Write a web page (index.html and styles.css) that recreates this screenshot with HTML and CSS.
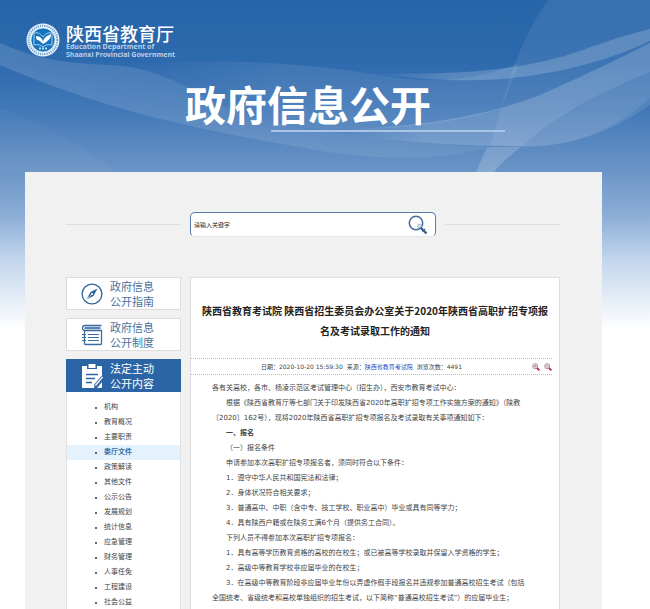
FILE: index.html
```html
<!DOCTYPE html>
<html lang="zh-CN">
<head>
<meta charset="utf-8">
<meta name="viewport" content="width=device-width, initial-scale=1">
<title>陕西省教育厅 政府信息公开</title>
<link rel="stylesheet" href="styles.css">
</head>
<body>
<svg class="waves" viewBox="0 0 650 172" preserveAspectRatio="none" aria-hidden="true">
  <defs>
    <linearGradient id="fade-in">
      <stop offset="0" stop-color="#fff" stop-opacity="0"/>
      <stop offset=".4" stop-color="#fff" stop-opacity=".08"/>
      <stop offset="1" stop-color="#fff" stop-opacity=".08"/>
    </linearGradient>
    <linearGradient id="fade-out">
      <stop offset="0" stop-color="#fff" stop-opacity=".14"/>
      <stop offset="1" stop-color="#fff" stop-opacity=".06"/>
    </linearGradient>
    <linearGradient id="streak">
      <stop offset="0" stop-color="#fff" stop-opacity="0"/>
      <stop offset=".3" stop-color="#fff" stop-opacity=".18"/>
      <stop offset="1" stop-color="#fff" stop-opacity=".18"/>
    </linearGradient>
  </defs>
  <path d="M0 43C40 61 70 63 110 65C150 67 175 80 200 95C240 118 290 128 330 132C380 138 440 145 487 147C440 164 350 158 300 147C200 130 110 112 0 65Z" fill="url(#fade-out)"/>
  <path d="M120 66C220 56 320 64 390 77C440 84 480 79 519 63L501 109C440 126 400 129 325 130C260 126 215 104 190 90C170 76 145 68 120 66Z" fill="url(#fade-in)"/>
  <path d="M548 0H650V98C620 126 580 145 530 147C515 147 498 146 490 145L501 109C512 65 528 28 548 0Z" fill="#fff" opacity=".08"/>
  <path d="M370 73C450 75 520 72 580 51C610 40 630 34 650 29V41C610 60 550 78 480 80C445 81 415 79 370 73Z" fill="url(#streak)"/>
  <path d="M325 131C400 127 470 122 540 95C590 73 620 58 650 43V72C600 92 550 119 523 146C460 147 390 141 325 131Z" fill="url(#streak)"/>
  <path d="M523 146C550 119 600 92 650 72V105C610 133 570 147 523 146Z" fill="#fff" opacity=".1"/>
  <path d="M487 147H521C511 155 501 163 494 172H476Z" fill="#fff" opacity=".18"/>
  <path d="M0 108C40 122 75 142 112 168L108 172H0Z" fill="#fff" opacity=".03"/>
</svg>

<header class="banner">
  <a class="brand" href="#">
    <svg class="emblem" viewBox="0 0 34 34" aria-hidden="true">
      <circle cx="17" cy="17" r="16.5" fill="#eaf4fc"/>
      <circle cx="17" cy="17" r="14.3" fill="none" stroke="#6d9dcb" stroke-width="2" stroke-dasharray="1.2 1"/>
      <circle cx="17" cy="17" r="12" fill="#1573bd" stroke="#fff" stroke-width=".6"/>
      <path d="M8 10C12 9 15 11 17 14C19 11 22 9 26 10V22C22 21 19 22 17 24C15 22 12 21 8 22Z" fill="none" stroke="#9fd0ef" stroke-width="1"/>
      <path d="M17 21C15 19 13 17 11 17C10 15 10 14 10 13C14 13 17 16 17 19C18 14 21 13 25 11C25 16 22 18 17 21Z" fill="#fff"/>
      <path d="M13 25.500H21" stroke="#b9def4" stroke-width="2" stroke-dasharray="2 1"/>
    </svg>
    <span class="brand-text">
      <span class="brand-name">陕西省教育厅</span>
      <span class="brand-en">Education Department of</span>
      <span class="brand-en">Shaanxi Provincial Government</span>
    </span>
  </a>
  <h1 class="site-title">政府信息公开</h1>
</header>

<main class="page">
  <form class="search-row">
    <span class="rule"></span>
    <div class="search">
      <input class="search-input" type="text" placeholder="请输入关键字" aria-label="请输入关键字">
      <button class="search-button" type="button" aria-label="搜索">
        <svg viewBox="0 0 20 20" aria-hidden="true">
          <circle cx="8" cy="8" r="6.700" fill="none" stroke="#446b99" stroke-width="1.500"/>
          <circle cx="11.500" cy="11" r="2" fill="#d5e2ef" stroke="#8ba8c8" stroke-width=".7"/>
          <path d="M12.500 12.500L18.500 18.500" stroke="#385f8e" stroke-width="2.400"/>
          <path d="M14.500 16.500L17 14" stroke="#385f8e" stroke-width="1.200"/>
        </svg>
      </button>
    </div>
    <span class="rule"></span>
  </form>

  <div class="columns">
    <nav class="sidebar">
      <a class="tab" href="#">
        <svg class="tab-icon" viewBox="0 0 22 24" aria-hidden="true">
          <circle cx="11" cy="12" r="9.900" fill="none" stroke="#2f659d" stroke-width="1.300"/>
          <path d="M16.500 6.500L12.500 14L5.500 17.500L9.500 10Z" fill="#2f659d"/>
          <path d="M6 17L11.500 11.500" stroke="#fff" stroke-width=".7"/>
          <circle cx="11" cy="12" r="1" fill="#fff"/>
        </svg>
        <span>政府信息<br>公开指南</span>
      </a>
      <a class="tab" href="#">
        <svg class="tab-icon" viewBox="0 0 22 24" fill="none" stroke="#3b6b9f" aria-hidden="true">
          <path d="M3.500 7.500V20.500Q3.500 21.500 4.500 21.500H19.500Q20.500 21.500 20.500 20.500V7.500H3.500Q1.500 7.500 1.500 5Q1.500 2.500 3.500 2.500H20.500" stroke-width="1.300"/>
          <path d="M3.500 5H19.500" stroke-width="2.400" stroke="#5c84b0"/>
          <path d="M1 11.500H5M1 14.500H5M1 17.500H5M7 11.500H18M7 14.500H18M7 17.500H18" stroke-width="1.200"/>
        </svg>
        <span>政府信息<br>公开制度</span>
      </a>
      <a class="tab tab-current" href="#">
        <svg class="tab-icon" viewBox="0 0 22 24" aria-hidden="true">
          <path d="M2 2H6V5H16V2H20Q21 2 21 3V13L14 21L13 24H2Q1 24 1 23V3Q1 2 2 2Z" fill="#fff"/>
          <path d="M7.500 0H14.500V4H7.500Z" fill="#fff"/>
          <path d="M21 18V23Q21 24 20 24H16Z" fill="#fff"/>
          <path d="M5 10.500H17M5 14.500H14M5 18.500H11" stroke="#2c65a6" stroke-width="1.400"/>
          <path d="M21.500 13L14 22" stroke="#2c65a6" stroke-width="3"/>
          <path d="M21.500 13L14.500 21.500" stroke="#fff" stroke-width="1.300"/>
        </svg>
        <span>法定主动<br>公开内容</span>
      </a>
      <ul class="menu">
        <li><a href="#">机构</a></li>
        <li><a href="#">教育概况</a></li>
        <li><a href="#">主要职责</a></li>
        <li class="active"><a href="#">委厅文件</a></li>
        <li><a href="#">政策解读</a></li>
        <li><a href="#">其他文件</a></li>
        <li><a href="#">公示公告</a></li>
        <li><a href="#">发展规划</a></li>
        <li><a href="#">统计信息</a></li>
        <li><a href="#">应急管理</a></li>
        <li><a href="#">财务管理</a></li>
        <li><a href="#">人事任免</a></li>
        <li><a href="#">工程建设</a></li>
        <li><a href="#">社会公益</a></li>
      </ul>
    </nav>

    <article class="article">
      <h2 class="headline">陕西省教育考试院 陕西省招生委员会办公室关于2020年陕西省高职扩招专项报<br>名及考试录取工作的通知</h2>
      <div class="meta">
        <p class="meta-text">
          <span>日期：2020-10-20 15:59:30</span>
          <span>来源：<a href="#">陕西省教育考试院</a></span>
          <span>浏览次数：4491</span>
        </p>
        <div class="zoomers">
          <button type="button" aria-label="放大">
            <svg viewBox="0 0 8 8" aria-hidden="true"><circle cx="3.200" cy="3.200" r="2.500" fill="#e7dde0" stroke="#a8959a"/><path d="M2 3.200H4.400M3.200 2V4.400" stroke="#a35e68" stroke-width=".5"/><path d="M5 5L7.400 7.400" stroke="#b3202e" stroke-width="1.700"/></svg>
          </button>
          <button type="button" aria-label="缩小">
            <svg viewBox="0 0 8 8" aria-hidden="true"><circle cx="3.200" cy="3.200" r="2.500" fill="#e7dde0" stroke="#a8959a"/><path d="M2 3.200H4.400" stroke="#a35e68" stroke-width=".5"/><path d="M5 5L7.400 7.400" stroke="#b3202e" stroke-width="1.700"/></svg>
          </button>
        </div>
      </div>
      <div class="content">
        <p class="flush">各有关高校，各市、杨凌示范区考试管理中心（招生办），西安市教育考试中心：</p>
        <p>根据《陕西省教育厅等七部门关于印发陕西省2020年高职扩招专项工作实施方案的通知》（陕教<br>〔2020〕162号），现将2020年陕西省高职扩招专项报名及考试录取有关事项通知如下：</p>
        <p><strong>一、报名</strong></p>
        <p>（一）报名条件</p>
        <p>申请参加本次高职扩招专项报名者，须同时符合以下条件：</p>
        <p>1．遵守中华人民共和国宪法和法律；</p>
        <p>2．身体状况符合相关要求；</p>
        <p>3．普通高中、中职（含中专、技工学校、职业高中）毕业或具有同等学力；</p>
        <p>4．具有陕西户籍或在陕务工满6个月（提供务工合同）。</p>
        <p>下列人员不得参加本次高职扩招专项报名：</p>
        <p>1．具有高等学历教育资格的高校的在校生；或已被高等学校录取并保留入学资格的学生；</p>
        <p>2．高级中等教育学校非应届毕业的在校生；</p>
        <p>3．在高级中等教育阶段非应届毕业年份以弄虚作假手段报名并违规参加普通高校招生考试（包括<br>全国统考、省级统考和高校单独组织的招生考试，以下简称“普通高校招生考试”）的应届毕业生；</p>
        <p>4．因违反国家教育考试规定，被给予暂停参加高校招生考试处理且在停考期内的人员；</p>
      </div>
    </article>
  </div>
</main>
</body>
</html>
```
FILE: styles.css
```css
* {
  box-sizing: border-box;
}

body {
  margin: 0;
  height: 100vh;
  overflow: hidden;
  position: relative;
  background: #fff linear-gradient(#2665a9 0, #2d69ad 60px, #4278b7 110px, #6792c5 165px, #8badd6 215px, #c3d6ec 260px, #fff 330px) no-repeat;
  font-family: "DejaVu Sans", "Noto Sans CJK SC", sans-serif;
  font-size: 7px;
  color: #444;
}

a {
  color: inherit;
  text-decoration: none;
}

button {
  padding: 0;
  border: 0;
  background: none;
}

svg {
  display: block;
}

.waves {
  position: absolute;
  top: 0;
  left: 0;
  width: 100%;
  height: 172px;
}

/* Banner */
.banner {
  position: relative;
  height: 172px;
  padding: 23px 26px 0;
  color: #fff;
}

.brand {
  display: flex;
  align-items: flex-start;
  gap: 6px;
}

.emblem {
  width: 34px;
  height: 34px;
}

.brand-text {
  display: flex;
  flex-direction: column;
}

.brand-name {
  font: 500 18px/20px "Noto Sans CJK SC", sans-serif;
}

.brand-en {
  font: 700 7px/8px "Noto Sans", sans-serif;
  color: #b9d0ea;
}

.site-title {
  width: 320px;
  margin: 18px 0 0 159px;
  font: 700 41px/53px "Noto Sans CJK SC", sans-serif;
  display: flex;
  flex-direction: column;
}

.site-title::after {
  content: "";
  height: 2px;
  margin-left: 86px;
  background: #a9c6e8;
}

/* Page panel */
.page {
  position: relative;
  margin: 0 48px 0 25px;
  padding: 40px 42px 0 41px;
  background: #f1f1f1;
}

.search-row {
  display: flex;
  align-items: center;
  gap: 9px;
}

.rule {
  flex: 1;
  height: 1px;
  background: #dcdfe1;
}

.search {
  display: flex;
  align-items: center;
  width: 246px;
  height: 25px;
  padding: 0 7px 0 3px;
  border: 1px solid #557ca8;
  border-bottom-color: #dfe5ec;
  border-radius: 5px;
  background: #fff;
}

.search-input {
  flex: 1;
  min-width: 0;
  padding: 0;
  border: 0;
  outline: 0;
  background: none;
  font: 6px/12px "Noto Sans CJK SC", sans-serif;
}

.search-input::placeholder {
  color: #222;
}

.search-button svg {
  width: 20px;
  height: 20px;
}

.columns {
  display: flex;
  align-items: flex-start;
  gap: 9px;
  margin-top: 40px;
}

/* Sidebar */
.sidebar {
  flex: 0 0 115px;
}

.tab {
  display: flex;
  align-items: center;
  gap: 7px;
  height: 33px;
  margin-bottom: 8px;
  padding-left: 14px;
  border: 1px solid #dcdcdc;
  background: #fff;
  font: 11px/15px "Noto Sans CJK SC", sans-serif;
  color: #47729f;
}

.tab-icon {
  width: 22px;
  height: 24px;
}

.tab-current {
  margin-bottom: 0;
  border-color: #2c65a6;
  background: #2c65a6;
  color: #fff;
}

.menu {
  margin: 0;
  padding: 8px 0 20px;
  border: 1px solid #e2e2e2;
  border-top: 0;
  background: #fff;
  list-style: none;
}

.menu li {
  display: flex;
  align-items: center;
  gap: 7px;
  padding-left: 28px;
  line-height: 15px;
}

.menu li::before {
  content: "";
  width: 2px;
  height: 2px;
  background: #666;
}

.menu .active {
  background: #e3f2fd;
  font-weight: 700;
  color: #3c6f9f;
}

/* Article */
.article {
  flex: 1;
  min-width: 0;
  padding-top: 23px;
  border: 1px solid #dedede;
  background: #fff;
}

.headline {
  margin: 0;
  font: 700 10px/20px "Noto Sans CJK SC", sans-serif;
  text-align: center;
  color: #222;
}

.meta {
  display: flex;
  align-items: center;
  height: 17px;
  margin: 17px 7px 0 0;
  border: 1px dotted #bbb;
  border-width: 1px 0;
}

.meta-text {
  flex: 1;
  display: flex;
  justify-content: center;
  gap: 4px;
  margin: 0;
  font-size: 6px;
  line-height: 15px;
}

.meta-text a {
  color: #1a4fc4;
}

.zoomers {
  display: flex;
  gap: 4px;
}

.zoomers svg {
  width: 8px;
  height: 8px;
}

.content {
  padding: 6px 20px 0 21px;
  line-height: 15px;
  white-space: nowrap;
}

.content p {
  margin: 0;
  text-indent: 2em;
}

.content .flush {
  text-indent: 0;
}
```
